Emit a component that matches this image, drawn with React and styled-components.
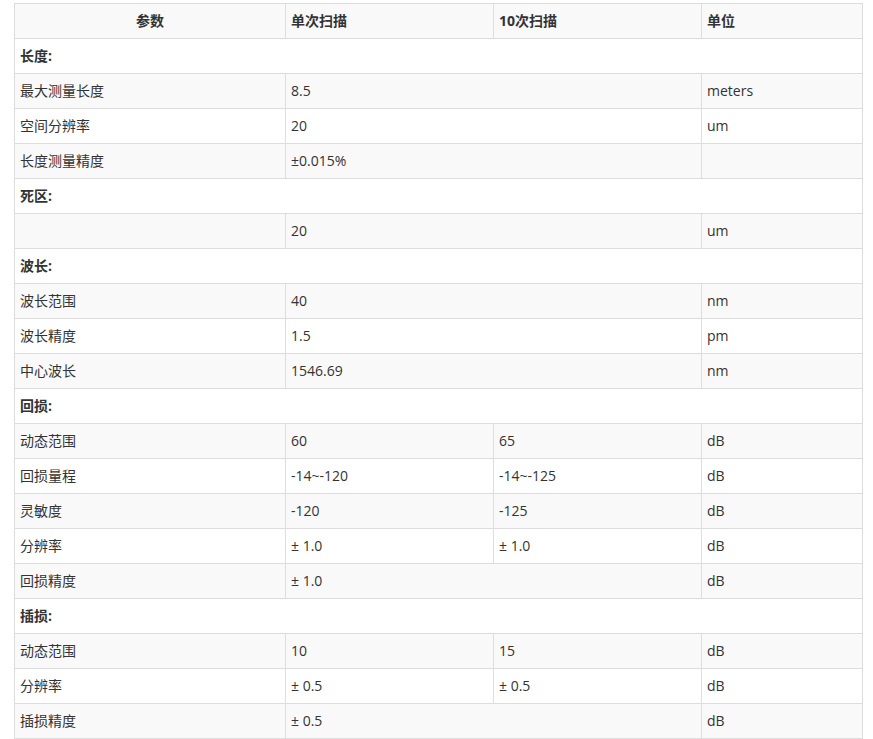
import React from "react";
import styled, { createGlobalStyle } from "styled-components";

const Global = createGlobalStyle`
  html, body { margin: 0; padding: 0; background: #fff; }
  body { font-family: "Open Sans", "Noto Sans CJK SC", sans-serif; color: #333; }
`;

const Wrap = styled.div`
  padding: 3px 0 0 14px;
`;

const Table = styled.table`
  width: 848px;
  border-collapse: collapse;
  table-layout: fixed;
  font-size: 14px;
  line-height: 20px;
`;

const Row = styled.tr`
  height: 35px;
  background: ${(p) => (p.$shade ? "#f9f9f9" : "#fff")};
`;

const Cell = styled.td`
  border: 1px solid #dddddd;
  padding: 0 5px;
  vertical-align: middle;
  text-align: ${(p) => (p.$center ? "center" : "left")};
  font-weight: ${(p) => (p.$bold ? 700 : 400)};
  white-space: nowrap;
`;

const rows = [
  { section: "长度:" },
  { cells: ["最大测量长度", ["8.5", 2], "meters"] },
  { cells: ["空间分辨率", ["20", 2], "um"] },
  { cells: ["长度测量精度", ["±0.015%", 2], ""] },
  { section: "死区:" },
  { cells: ["", ["20", 2], "um"] },
  { section: "波长:" },
  { cells: ["波长范围", ["40", 2], "nm"] },
  { cells: ["波长精度", ["1.5", 2], "pm"] },
  { cells: ["中心波长", ["1546.69", 2], "nm"] },
  { section: "回损:" },
  { cells: ["动态范围", "60", "65", "dB"] },
  { cells: ["回损量程", "-14~-120", "-14~-125", "dB"] },
  { cells: ["灵敏度", "-120", "-125", "dB"] },
  { cells: ["分辨率", "± 1.0", "± 1.0", "dB"] },
  { cells: ["回损精度", ["± 1.0", 2], "dB"] },
  { section: "插损:" },
  { cells: ["动态范围", "10", "15", "dB"] },
  { cells: ["分辨率", "± 0.5", "± 0.5", "dB"] },
  { cells: ["插损精度", ["± 0.5", 2], "dB"] },
];

export default function App() {
  return (
    <>
      <Global />
      <Wrap>
        <Table>
          <colgroup>
            <col style={{ width: 271 }} />
            <col style={{ width: 208 }} />
            <col style={{ width: 208 }} />
            <col style={{ width: 161 }} />
          </colgroup>
          <thead>
            <Row $shade>
              <Cell as="th" $center $bold>参数</Cell>
              <Cell as="th" $bold>单次扫描</Cell>
              <Cell as="th" $bold>10次扫描</Cell>
              <Cell as="th" $bold>单位</Cell>
            </Row>
          </thead>
          <tbody>
            {rows.map((r, i) => (
              <Row key={i} $shade={i % 2 === 1}>
                {r.section ? (
                  <Cell colSpan={4} $bold>{r.section}</Cell>
                ) : (
                  r.cells.map((c, j) =>
                    Array.isArray(c) ? (
                      <Cell key={j} colSpan={c[1]}>{c[0]}</Cell>
                    ) : (
                      <Cell key={j}>{c}</Cell>
                    )
                  )
                )}
              </Row>
            ))}
          </tbody>
        </Table>
      </Wrap>
    </>
  );
}
